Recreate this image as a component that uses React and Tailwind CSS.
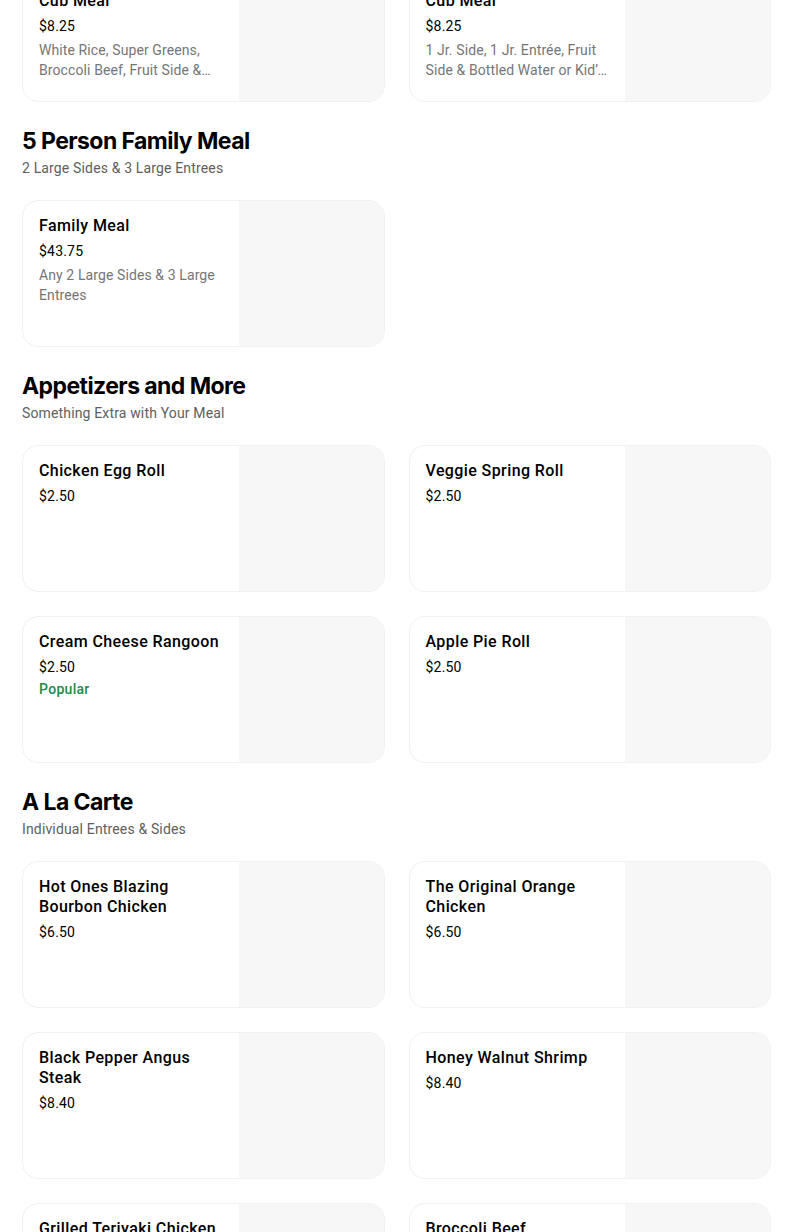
import React from 'react';

const sections = [
  {
    id: 'kids',
    items: [
      {
        name: 'Wok Smart Kid\u2019s\nCub Meal\u2122',
        price: '$8.25',
        desc: 'White Rice, Super Greens, Broccoli Beef, Fruit Side & Bottled Water or Kid\u2019s Drink',
      },
      {
        name: 'Panda Kid\u2019s Choice\nCub Meal\u2122',
        price: '$8.25',
        desc: '1 Jr. Side, 1 Jr. Entr\u00e9e, Fruit Side & Bottled Water or Kid\u2019s Drink',
      },
    ],
  },
  {
    id: 'family',
    title: '5 Person Family Meal',
    subtitle: '2 Large Sides & 3 Large Entrees',
    items: [{ name: 'Family Meal', price: '$43.75', desc: 'Any 2 Large Sides & 3 Large Entrees' }],
  },
  {
    id: 'apps',
    title: 'Appetizers and More',
    subtitle: 'Something Extra with Your Meal',
    items: [
      { name: 'Chicken Egg Roll', price: '$2.50' },
      { name: 'Veggie Spring Roll', price: '$2.50' },
      { name: 'Cream Cheese Rangoon', price: '$2.50', popular: true },
      { name: 'Apple Pie Roll', price: '$2.50' },
    ],
  },
  {
    id: 'alacarte',
    title: 'A La Carte',
    subtitle: 'Individual Entrees & Sides',
    items: [
      { name: 'Hot Ones Blazing Bourbon Chicken', price: '$6.50' },
      { name: 'The Original Orange Chicken', price: '$6.50' },
      { name: 'Black Pepper Angus Steak', price: '$8.40' },
      { name: 'Honey Walnut Shrimp', price: '$8.40' },
      { name: 'Grilled Teriyaki Chicken', price: '$6.50' },
      { name: 'Broccoli Beef', price: '$6.50' },
    ],
  },
];

function ItemCard({ item }) {
  return (
    <div className="flex h-[147px] overflow-hidden rounded-2xl border border-[#f1f1f1] bg-white">
      <div className="min-w-0 flex-1 px-4 pt-[15px]">
        <div className="whitespace-pre-line text-base font-medium leading-5 tracking-[0.4px] text-black">
          {item.name}
        </div>
        <div className="mt-[5px] text-sm leading-5 tracking-[0.2px] text-black">{item.price}</div>
        {item.desc && (
          <div className="mt-1 line-clamp-2 text-sm leading-5 tracking-[0.1px] text-[#767676]">{item.desc}</div>
        )}
        {item.popular && (
          <div className="mt-[2px] text-sm font-medium leading-5 tracking-[0.3px] text-[#1e8a4c]">Popular</div>
        )}
      </div>
      <div className="w-[145px] shrink-0 bg-[#f7f7f7]" />
    </div>
  );
}

export default function App() {
  return (
    <div className="min-h-[1232px] overflow-hidden bg-white font-['Roboto',sans-serif]">
      <div className="ml-[22px] w-[749px]">
        {sections.map((section, i) => (
          <section key={section.id} className={i === 0 ? '-mt-[45px]' : 'mt-[23px]'}>
            {section.title && (
              <div className="mb-[22px]">
                <h2 className="font-['Inter',sans-serif] text-[23px] font-bold leading-8 tracking-tight text-black">
                  {section.title}
                </h2>
                <p className="mt-px text-sm leading-5 tracking-[0.15px] text-[#5e5e5e]">{section.subtitle}</p>
              </div>
            )}
            <div className="grid grid-cols-2 gap-6">
              {section.items.map((item) => (
                <ItemCard key={item.name} item={item} />
              ))}
            </div>
          </section>
        ))}
      </div>
    </div>
  );
}
